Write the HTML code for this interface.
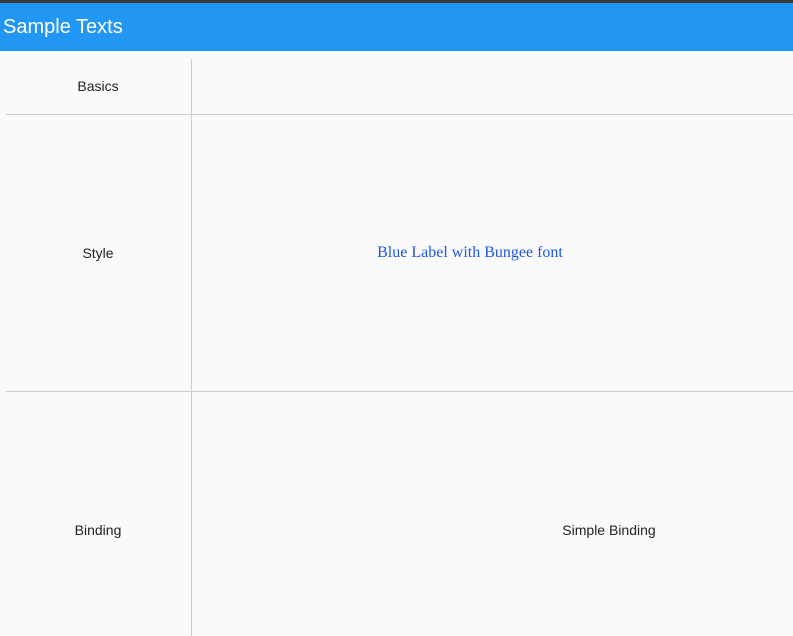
<!DOCTYPE html>
<html><head><style>
body{margin:0;width:793px;height:636px;background:#fafafa;font-family:"Liberation Sans",sans-serif;position:relative;overflow:hidden}
.top{position:absolute;left:0;top:0;width:793px;height:3px;background:#3a3a3a}
.bar{position:absolute;left:0;top:3px;width:793px;height:48px;background:#2196f3;color:#fff;font-size:20px;line-height:48px;padding-left:3px;box-sizing:border-box}
.v{position:absolute;left:191px;top:59px;width:1px;height:577px;background:#ccc}
.h{position:absolute;left:6px;width:787px;height:1px;background:#ccc}
.t{position:absolute;font-size:14px;color:#222;transform:translate(-50%,-50%);white-space:nowrap}
</style></head><body>
<div class="top"></div>
<div class="bar">Sample Texts</div>
<div class="v"></div>
<div class="h" style="top:114px"></div>
<div class="h" style="top:391px"></div>
<div class="t" style="left:98px;top:86px">Basics</div>
<div class="t" style="left:98px;top:253px">Style</div>
<div class="t" style="left:98px;top:530px">Binding</div>
<div class="t" style="left:470px;top:253px;color:#1e56e0;font-family:'Liberation Serif',serif;font-size:16px">Blue Label with Bungee font</div>
<div class="t" style="left:609px;top:530px">Simple Binding</div>
</body></html>
